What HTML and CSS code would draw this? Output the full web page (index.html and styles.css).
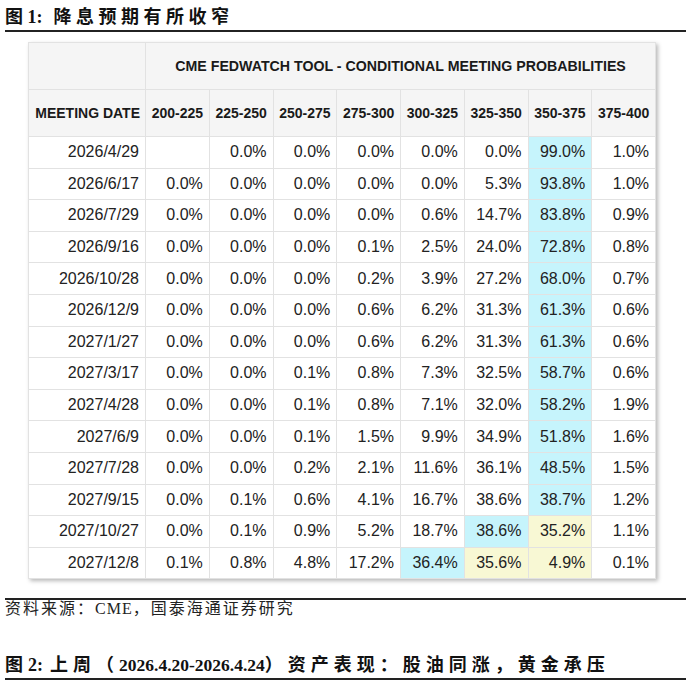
FILE: index.html
```html
<!DOCTYPE html>
<html lang="zh-CN">
<head>
<meta charset="utf-8">
<title>降息预期有所收窄</title>
<link rel="stylesheet" href="styles.css">
</head>
<body>
<div class="page">
  <h2 class="fig-title">图<span class="num">1:</span>&nbsp;降息预期有所收窄</h2>

  <div class="table-wrap">
    <table class="fw">
      <colgroup>
        <col class="c-date">
        <col span="8" class="c-val">
      </colgroup>
      <thead>
        <tr class="h1">
          <th></th>
          <th colspan="8" class="center">CME FEDWATCH TOOL - CONDITIONAL MEETING PROBABILITIES</th>
        </tr>
        <tr class="h2">
          <th>MEETING DATE</th>
          <th>200-225</th><th>225-250</th><th>250-275</th><th>275-300</th>
          <th>300-325</th><th>325-350</th><th>350-375</th><th>375-400</th>
        </tr>
      </thead>
      <tbody>
        <tr><td>2026/4/29</td><td></td><td>0.0%</td><td>0.0%</td><td>0.0%</td><td>0.0%</td><td>0.0%</td><td class="cy">99.0%</td><td>1.0%</td></tr>
        <tr><td>2026/6/17</td><td>0.0%</td><td>0.0%</td><td>0.0%</td><td>0.0%</td><td>0.0%</td><td>5.3%</td><td class="cy">93.8%</td><td>1.0%</td></tr>
        <tr><td>2026/7/29</td><td>0.0%</td><td>0.0%</td><td>0.0%</td><td>0.0%</td><td>0.6%</td><td>14.7%</td><td class="cy">83.8%</td><td>0.9%</td></tr>
        <tr><td>2026/9/16</td><td>0.0%</td><td>0.0%</td><td>0.0%</td><td>0.1%</td><td>2.5%</td><td>24.0%</td><td class="cy">72.8%</td><td>0.8%</td></tr>
        <tr><td>2026/10/28</td><td>0.0%</td><td>0.0%</td><td>0.0%</td><td>0.2%</td><td>3.9%</td><td>27.2%</td><td class="cy">68.0%</td><td>0.7%</td></tr>
        <tr><td>2026/12/9</td><td>0.0%</td><td>0.0%</td><td>0.0%</td><td>0.6%</td><td>6.2%</td><td>31.3%</td><td class="cy">61.3%</td><td>0.6%</td></tr>
        <tr><td>2027/1/27</td><td>0.0%</td><td>0.0%</td><td>0.0%</td><td>0.6%</td><td>6.2%</td><td>31.3%</td><td class="cy">61.3%</td><td>0.6%</td></tr>
        <tr><td>2027/3/17</td><td>0.0%</td><td>0.0%</td><td>0.1%</td><td>0.8%</td><td>7.3%</td><td>32.5%</td><td class="cy">58.7%</td><td>0.6%</td></tr>
        <tr><td>2027/4/28</td><td>0.0%</td><td>0.0%</td><td>0.1%</td><td>0.8%</td><td>7.1%</td><td>32.0%</td><td class="cy">58.2%</td><td>1.9%</td></tr>
        <tr><td>2027/6/9</td><td>0.0%</td><td>0.0%</td><td>0.1%</td><td>1.5%</td><td>9.9%</td><td>34.9%</td><td class="cy">51.8%</td><td>1.6%</td></tr>
        <tr><td>2027/7/28</td><td>0.0%</td><td>0.0%</td><td>0.2%</td><td>2.1%</td><td>11.6%</td><td>36.1%</td><td class="cy">48.5%</td><td>1.5%</td></tr>
        <tr><td>2027/9/15</td><td>0.0%</td><td>0.1%</td><td>0.6%</td><td>4.1%</td><td>16.7%</td><td>38.6%</td><td class="cy">38.7%</td><td>1.2%</td></tr>
        <tr><td>2027/10/27</td><td>0.0%</td><td>0.1%</td><td>0.9%</td><td>5.2%</td><td>18.7%</td><td class="cy">38.6%</td><td class="ye">35.2%</td><td>1.1%</td></tr>
        <tr><td>2027/12/8</td><td>0.1%</td><td>0.8%</td><td>4.8%</td><td>17.2%</td><td class="cy">36.4%</td><td class="ye">35.6%</td><td class="ye">4.9%</td><td>0.1%</td></tr>
      </tbody>
    </table>
  </div>

  <p class="source">资料来源：<span class="lat">CME</span>，国泰海通证券研究</p>

  <h2 class="fig-title fig-title2">图<span class="num">2:</span>上周（<span class="num num-sm">2026.4.20-2026.4.24</span>）资产表现：股油同涨，黄金承压</h2>
</div>
</body>
</html>
```

FILE: styles.css
```css
html, body {
  margin: 0;
  padding: 0;
  background: #ffffff;
}

.page {
  padding: 0 5px;
}

.fig-title {
  margin: 0;
  padding-top: 4px;
  font-family: "Liberation Serif", "Noto Sans CJK SC", serif;
  font-weight: bold;
  font-size: 18px;
  line-height: 26px;
  letter-spacing: 4.5px;
  color: #111;
  border-bottom: 2px solid #222;
  white-space: nowrap;
}

.fig-title .num {
  letter-spacing: 0;
  margin-right: 2px;
}

.table-wrap {
  margin: 10px 0 0 23px;
}

.fw {
  border-collapse: collapse;
  table-layout: fixed;
  width: 627px;
  font-family: "Liberation Sans", Arial, sans-serif;
  box-shadow: 2px 2px 4px rgba(0, 0, 0, 0.28);
  background: #fff;
}

.c-date { width: 117px; }
.c-val { width: 63.75px; }

.fw th,
.fw td {
  border: 1px solid #e2e2e2;
  padding: 0 6px 0 4px;
  text-align: right;
  white-space: nowrap;
}

.fw th {
  background: #f5f5f5;
  font-weight: bold;
  font-size: 14px;
  color: #1a1a1a;
  padding: 0 4px;
}

.fw th.center {
  text-align: center;
  font-size: 14.2px;
}

.fw tr.h1 { height: 47px; }
.fw tr.h2 { height: 47px; }

.fw tr.h2 th {
  text-align: center;
}

.fw tr.h2 th:first-child {
  text-align: right;
  padding-right: 5px;
}

.fw tbody tr {
  height: 31.6px;
}

.fw td {
  font-size: 16px;
  color: #222;
}

.fw td.cy {
  background: #c6f4fc;
}

.fw td.ye {
  background: #f8f8d4;
}

.source {
  margin: 19px 0 0;
  border-top: 2px solid #222;
  font-family: "Liberation Serif", "Noto Sans CJK SC", serif;
  font-size: 16px;
  line-height: 18px;
  letter-spacing: 2px;
  color: #222;
}

.source .lat {
  letter-spacing: 1px;
}

.fig-title2 {
  margin-top: 30px;
  letter-spacing: 5px;
}

.fig-title2 .num {
  margin-right: 7px;
}

.fig-title2 .num-sm {
  font-size: 17.5px;
  margin-right: 0;
}
```
